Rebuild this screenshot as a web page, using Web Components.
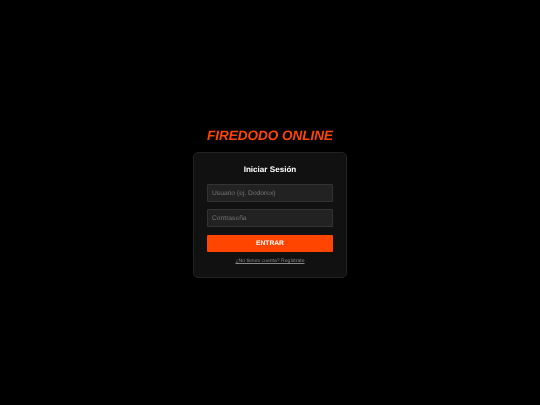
<!DOCTYPE html>
<html lang="es">
<head>
<meta charset="utf-8">
<title>Firedodo Online</title>
<style>
html, body { margin: 0; height: 100%; background: #000; }
body { font-family: "Liberation Sans", Arial, sans-serif; text-rendering: geometricPrecision; }
</style>
</head>
<body>
<login-page></login-page>
<script>
class TextField extends HTMLElement {
    constructor() {
        super();
        const shadowRoot = this.attachShadow({ mode: 'open' });
        shadowRoot.innerHTML = `
            <style>
                :host { display: block; }
                input {
                    display: block;
                    width: 100%;
                    height: 18px;
                    box-sizing: border-box;
                    padding: 0 4px;
                    background: #222;
                    border: 1px solid #333;
                    border-radius: 1px;
                    color: #fff;
                    font: 6.7px "Liberation Sans", Arial, sans-serif;
                    text-rendering: geometricPrecision;
                    outline: none;
                }
                input::placeholder { color: #777; opacity: 1; }
            </style>
            <input>
        `;
        const input = shadowRoot.querySelector('input');
        input.type = this.getAttribute('type') || 'text';
        input.placeholder = this.getAttribute('placeholder') || '';
    }
}

class LoginCard extends HTMLElement {
    constructor() {
        super();
        const shadowRoot = this.attachShadow({ mode: 'open' });
        shadowRoot.innerHTML = `
            <style>
                :host {
                    display: block;
                    width: 154px;
                    box-sizing: border-box;
                    padding: 11px 13px 13px;
                    background: #111;
                    border: 1px solid #222;
                    border-radius: 5px;
                }
                h2 {
                    margin: 0 0 9px;
                    color: #fff;
                    font-size: 8.1px;
                    line-height: 11px;
                    font-weight: bold;
                    text-align: center;
                }
                .fields { display: flex; flex-direction: column; gap: 7px; }
                button {
                    display: block;
                    width: 100%;
                    height: 17px;
                    margin-top: 8px;
                    padding: 0;
                    border: 0;
                    border-radius: 1px;
                    background: #ff4500;
                    color: #fff;
                    font: bold 6.7px "Liberation Sans", Arial, sans-serif;
                    text-rendering: geometricPrecision;
                }
                p {
                    margin: 6px 0 0;
                    color: #888;
                    font-size: 5.1px;
                    line-height: 6px;
                    text-align: center;
                    text-decoration: underline;
                    text-decoration-thickness: 0.5px;
                }
            </style>
            <h2>Iniciar Sesión</h2>
            <div class="fields"><slot></slot></div>
            <button>ENTRAR</button>
            <p>¿No tienes cuenta? Regístrate</p>
        `;
    }
}

class LoginPage extends HTMLElement {
    constructor() {
        super();
        const shadowRoot = this.attachShadow({ mode: 'open' });
        shadowRoot.innerHTML = `
            <style>
                :host {
                    display: flex;
                    flex-direction: column;
                    align-items: center;
                    justify-content: center;
                    height: 100vh;
                    will-change: transform;
                }
                h1 {
                    margin: 0 0 8px;
                    color: #ff4500;
                    font-size: 13.5px;
                    line-height: 17px;
                    font-style: italic;
                    font-weight: bold;
                }
            </style>
            <h1>FIREDODO ONLINE</h1>
            <login-card>
                <text-field placeholder="Usuario (ej. Dodorex)"></text-field>
                <text-field type="password" placeholder="Contraseña"></text-field>
            </login-card>
        `;
    }
}

customElements.define('text-field', TextField);
customElements.define('login-card', LoginCard);
customElements.define('login-page', LoginPage);
</script>
</body>
</html>
